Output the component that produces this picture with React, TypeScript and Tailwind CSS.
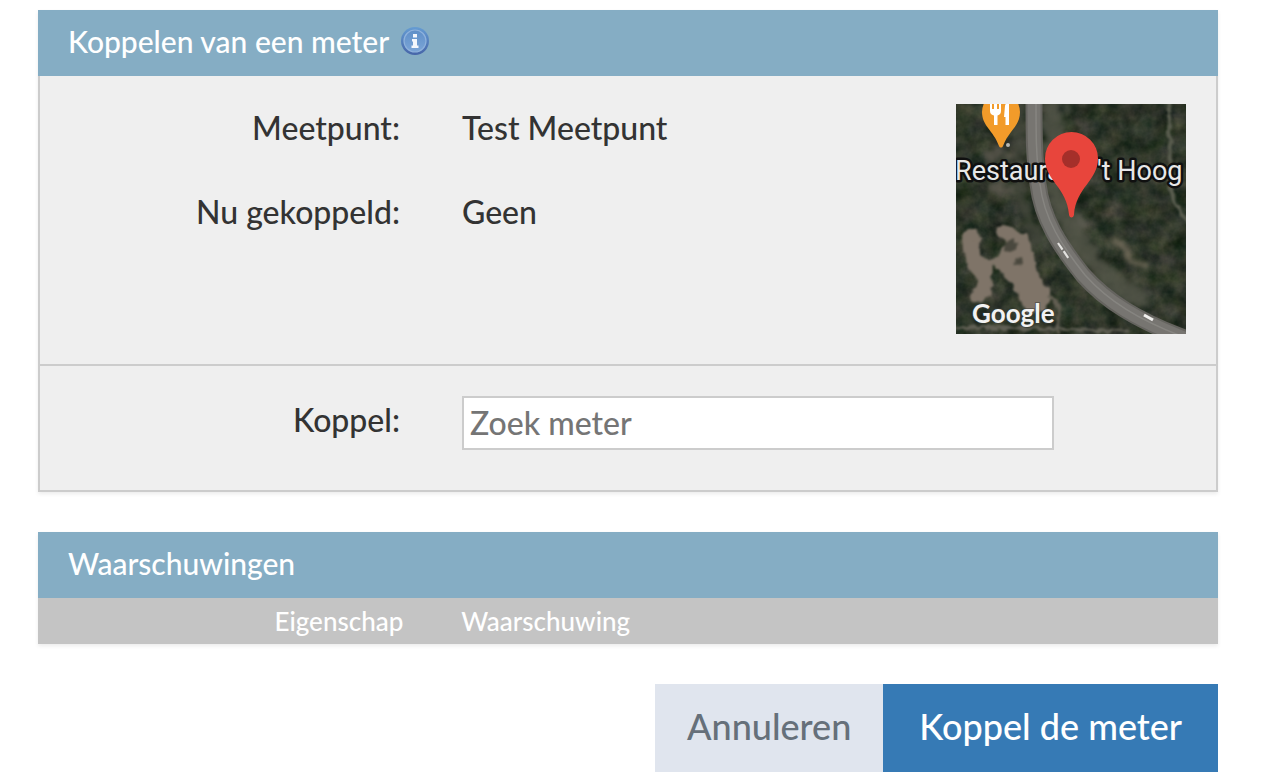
import { useState } from "react";
import type { ReactNode } from "react";

const InfoIcon = () => (
  <svg viewBox="0 0 28 28" className="w-7 h-7" aria-hidden="true">
    <defs>
      <linearGradient id="info-ring" x1="0" y1="0" x2="0" y2="1">
        <stop offset="0" stopColor="#659cd3" />
        <stop offset="1" stopColor="#4665a8" />
      </linearGradient>
      <linearGradient id="info-fill" x1="0" y1="0" x2="0" y2="1">
        <stop offset="0" stopColor="#5f8fc8" />
        <stop offset="1" stopColor="#7ba5d7" />
      </linearGradient>
    </defs>
    <circle cx="14" cy="14" r="14" fill="url(#info-ring)" />
    <circle cx="14" cy="14" r="11" fill="url(#info-fill)" stroke="#8fb2dc" strokeWidth="1.2" />
    <path d="M12 7h4v3.500h-4zM11 12h5v6.500h1.500V21h-7v-2.500H12v-4h-1z" fill="#f4f7fc" />
  </svg>
);

const MapThumbnail = () => (
  <svg
    viewBox="0 0 230 230"
    className="block w-[230px] h-[230px] shrink-0"
    role="img"
    aria-label="Satellietkaart van het meetpunt"
  >
    <defs>
      <filter id="trees" x="0" y="0" width="100%" height="100%" colorInterpolationFilters="sRGB">
        <feTurbulence type="fractalNoise" baseFrequency="0.06" numOctaves="4" seed="8" />
        <feColorMatrix values="0.3 0 0 0 0.03  0.24 0.06 0 0 0.06  0.22 0 0.06 0 0.02  0 0 0 0 1" />
        <feGaussianBlur stdDeviation="0.6" />
      </filter>
      <filter id="rough" x="-10%" y="-10%" width="120%" height="120%" colorInterpolationFilters="sRGB">
        <feTurbulence type="fractalNoise" baseFrequency="0.12" numOctaves="2" seed="3" result="n" />
        <feDisplacementMap in="SourceGraphic" in2="n" scale="8" xChannelSelector="R" yChannelSelector="G" />
        <feGaussianBlur stdDeviation="1" />
      </filter>
      <filter id="verge" x="-20%" y="-20%" width="140%" height="140%" colorInterpolationFilters="sRGB">
        <feTurbulence type="fractalNoise" baseFrequency="0.1" numOctaves="3" seed="5" result="n" />
        <feDisplacementMap in="SourceGraphic" in2="n" scale="24" xChannelSelector="R" yChannelSelector="G" />
        <feGaussianBlur stdDeviation="2.5" />
      </filter>
      <filter id="soft" x="-10%" y="-10%" width="120%" height="120%">
        <feGaussianBlur stdDeviation="0.7" />
      </filter>
    </defs>

    <rect width="230" height="230" filter="url(#trees)" />

    {/* verges and clearings */}
    <g filter="url(#verge)" fill="none" opacity="0.8">
      <path d="M98-5v75c2 32 16 62 42 90 20 20 36 30 54 38" stroke="#55574a" strokeWidth="20" />
      <path d="M64-5v80c0 25 8 47 22 70" stroke="#45483d" strokeWidth="11" />
      <path d="M28 50h30M36 84h22" stroke="#5e5a50" strokeWidth="11" />
      <path d="M158 136l12 10 9 14 18 2" stroke="#7d7463" strokeWidth="9" />
      <path d="M120 110l12 12" stroke="#656258" strokeWidth="12" />
    </g>
    <g filter="url(#rough)">
      <circle cx="15" cy="135" r="10" fill="#7f7468" />
      <path
        d="M6 138l4 24c4 8 11 10 11 18l-8 12c2 8 12 8 18 4 5-6 6-14 4-22l4-12 10 12c8 8 14 12 15 22l8 14 18-4c2-6 5-10 5-16-2-8-10-14-14-22l-6-30c-4-8-12-10-18-14-6-5-17-4-18 4 1 6 8 4 12 10-2 6-8 6-8 14-6 3-12 3-18 0-4-4-2-8 0-16z"
        fill="#7f7468"
      />
      <path d="M50 139c4-6 12-6 10 2-2 6-10 9-12 4zM58 155l8-1 1 6-8 1z" fill="#4a483e" />
      <path d="M92 192c12 6 13 18 9 38" fill="none" stroke="#625e52" strokeWidth="3" />
      <path d="M-5 224c60-2 130 2 180 4" fill="none" stroke="#605f54" strokeWidth="3" />
      <path d="M212-5c3 30 0 60 3 87 2 17 9 28 20 36" fill="none" stroke="#5a5d4f" strokeWidth="4" />
    </g>

    {/* road */}
    <g fill="none" filter="url(#soft)">
      <path d="M78-5c0 35 0 60 4 85 4 35 22 62 45 91 24 27 55 45 96 61l20 8" stroke="#65645f" strokeWidth="17" />
      <path d="M78-5c0 35 0 60 4 85 4 35 22 62 45 91 24 27 55 45 96 61l20 8" stroke="#777571" strokeWidth="13" />
      <path d="M80-5c0 35 0 60 4 85 4 35 22 62 45 91 24 27 55 45 96 61" stroke="#8d8b87" strokeWidth="1.5" opacity="0.7" />
      <path d="M102 139l11 16" stroke="#e3e2df" strokeWidth="2.2" strokeDasharray="8 2" />
      <path d="M188 211l9 5" stroke="#f1f0ee" strokeWidth="3" />
    </g>
    <circle cx="52" cy="41" r="2" fill="#b8b9b3" />

    {/* restaurant marker */}
    <path d="M26 8a19 19 0 0 1 38 0c0 14-11 18-17 34-1 2-3 2-4 0C37 26 26 22 26 8z" fill="#f29b2a" />
    <path d="M34 0h2v5h2V0h3v5h2V0h2v7c0 3-2 4-3.500 4.500V21h-3.500v-9.500C36 11 34 10 34 7z" fill="#fff" />
    <path d="M49 2c0-2 2-3 4-3v22h-3.500v-8H48z" fill="#fff" />

    <g
      fontFamily="Roboto, sans-serif"
      fontSize="27"
      fontWeight="400"
      fill="#e8e8e8"
      stroke="#101010"
      strokeWidth="5"
      strokeLinejoin="round"
      paintOrder="stroke"
    >
      <text x="-1" y="76">Restaurant</text>
      <text x="141" y="76">'t Hoog</text>
    </g>

    {/* selected location */}
    <path
      d="M89 54.500a26.500 26.500 0 0 1 53 0c0 22-22 29-24 56-.3 4-4.700 4-5 0-2-27-24-34-24-56z"
      fill="#e8453c"
    />
    <circle cx="115" cy="55" r="9" fill="#a52f2a" />

    <text
      x="16"
      y="219"
      fontFamily="Lato, sans-serif"
      fontSize="26"
      fontWeight="700"
      fill="#f2f2f2"
      stroke="#3b3b36"
      strokeOpacity="0.5"
      strokeWidth="2"
      paintOrder="stroke"
    >
      Google
    </text>
  </svg>
);

const PanelHeader = ({ children }: { children: ReactNode }) => (
  <h2 className="flex items-center gap-3 h-[66px] px-[30px] pb-1 bg-[#85adc4] text-white text-[30px] font-medium">
    {children}
  </h2>
);

const App = () => {
  const [query, setQuery] = useState("");

  return (
    <main className="bg-white pt-2.5 pb-2.5 pl-[38px] pr-[52px] font-['Trebuchet_MS',Lato,sans-serif] font-medium text-[#333]">
      <form onSubmit={(e) => e.preventDefault()}>
        <section className="shadow-[0_2px_4px_rgba(0,0,0,0.08)]">
          <PanelHeader>
            Koppelen van een meter
            <button type="button" aria-label="Uitleg">
              <InfoIcon />
            </button>
          </PanelHeader>

          <div className="border-2 border-t-0 border-[#ccc] bg-[#efefef] text-[32px] leading-[48px]">
            <div className="flex items-start pt-7 pb-[30px] pr-[30px] border-b-2 border-[#ccc]">
              <dl className="grid flex-1 grid-cols-[392px_1fr] gap-y-9">
                <dt className="px-8 text-right">Meetpunt:</dt>
                <dd className="pl-[30px]">Test Meetpunt</dd>
                <dt className="px-8 text-right">Nu gekoppeld:</dt>
                <dd className="pl-[30px]">Geen</dd>
              </dl>
              <MapThumbnail />
            </div>

            <div className="grid grid-cols-[392px_1fr] pt-[30px] pb-10">
              <label htmlFor="meter" className="px-8 text-right">
                Koppel:
              </label>
              <div className="px-[30px]">
                <input
                  id="meter"
                  type="text"
                  value={query}
                  onChange={(e) => setQuery(e.target.value)}
                  placeholder="Zoek meter"
                  className="block w-[592px] max-w-full h-[54px] px-1.5 pb-0.5 border-2 border-[#ccc] bg-white placeholder:text-[#757575]"
                />
              </div>
            </div>
          </div>
        </section>

        <section className="mt-10 shadow-[0_2px_4px_rgba(0,0,0,0.08)]">
          <PanelHeader>Waarschuwingen</PanelHeader>
          <table className="w-full table-fixed bg-[#c4c4c4] text-white text-[26px] leading-[46px]">
            <thead>
              <tr>
                <th className="w-1/3 p-0 pr-7 text-right font-medium">Eigenschap</th>
                <th className="p-0 pl-[30px] text-left font-medium">Waarschuwing</th>
              </tr>
            </thead>
          </table>
        </section>

        <div className="flex justify-end mt-10 text-[36px]">
          <button type="button" className="h-[88px] px-8 pb-1 bg-[#e0e5ee] text-[#66707a] font-medium">
            Annuleren
          </button>
          <button type="submit" className="h-[88px] px-9 pb-1 bg-[#367ab5] text-white font-medium">
            Koppel de meter
          </button>
        </div>
      </form>
    </main>
  );
};

export default App;
